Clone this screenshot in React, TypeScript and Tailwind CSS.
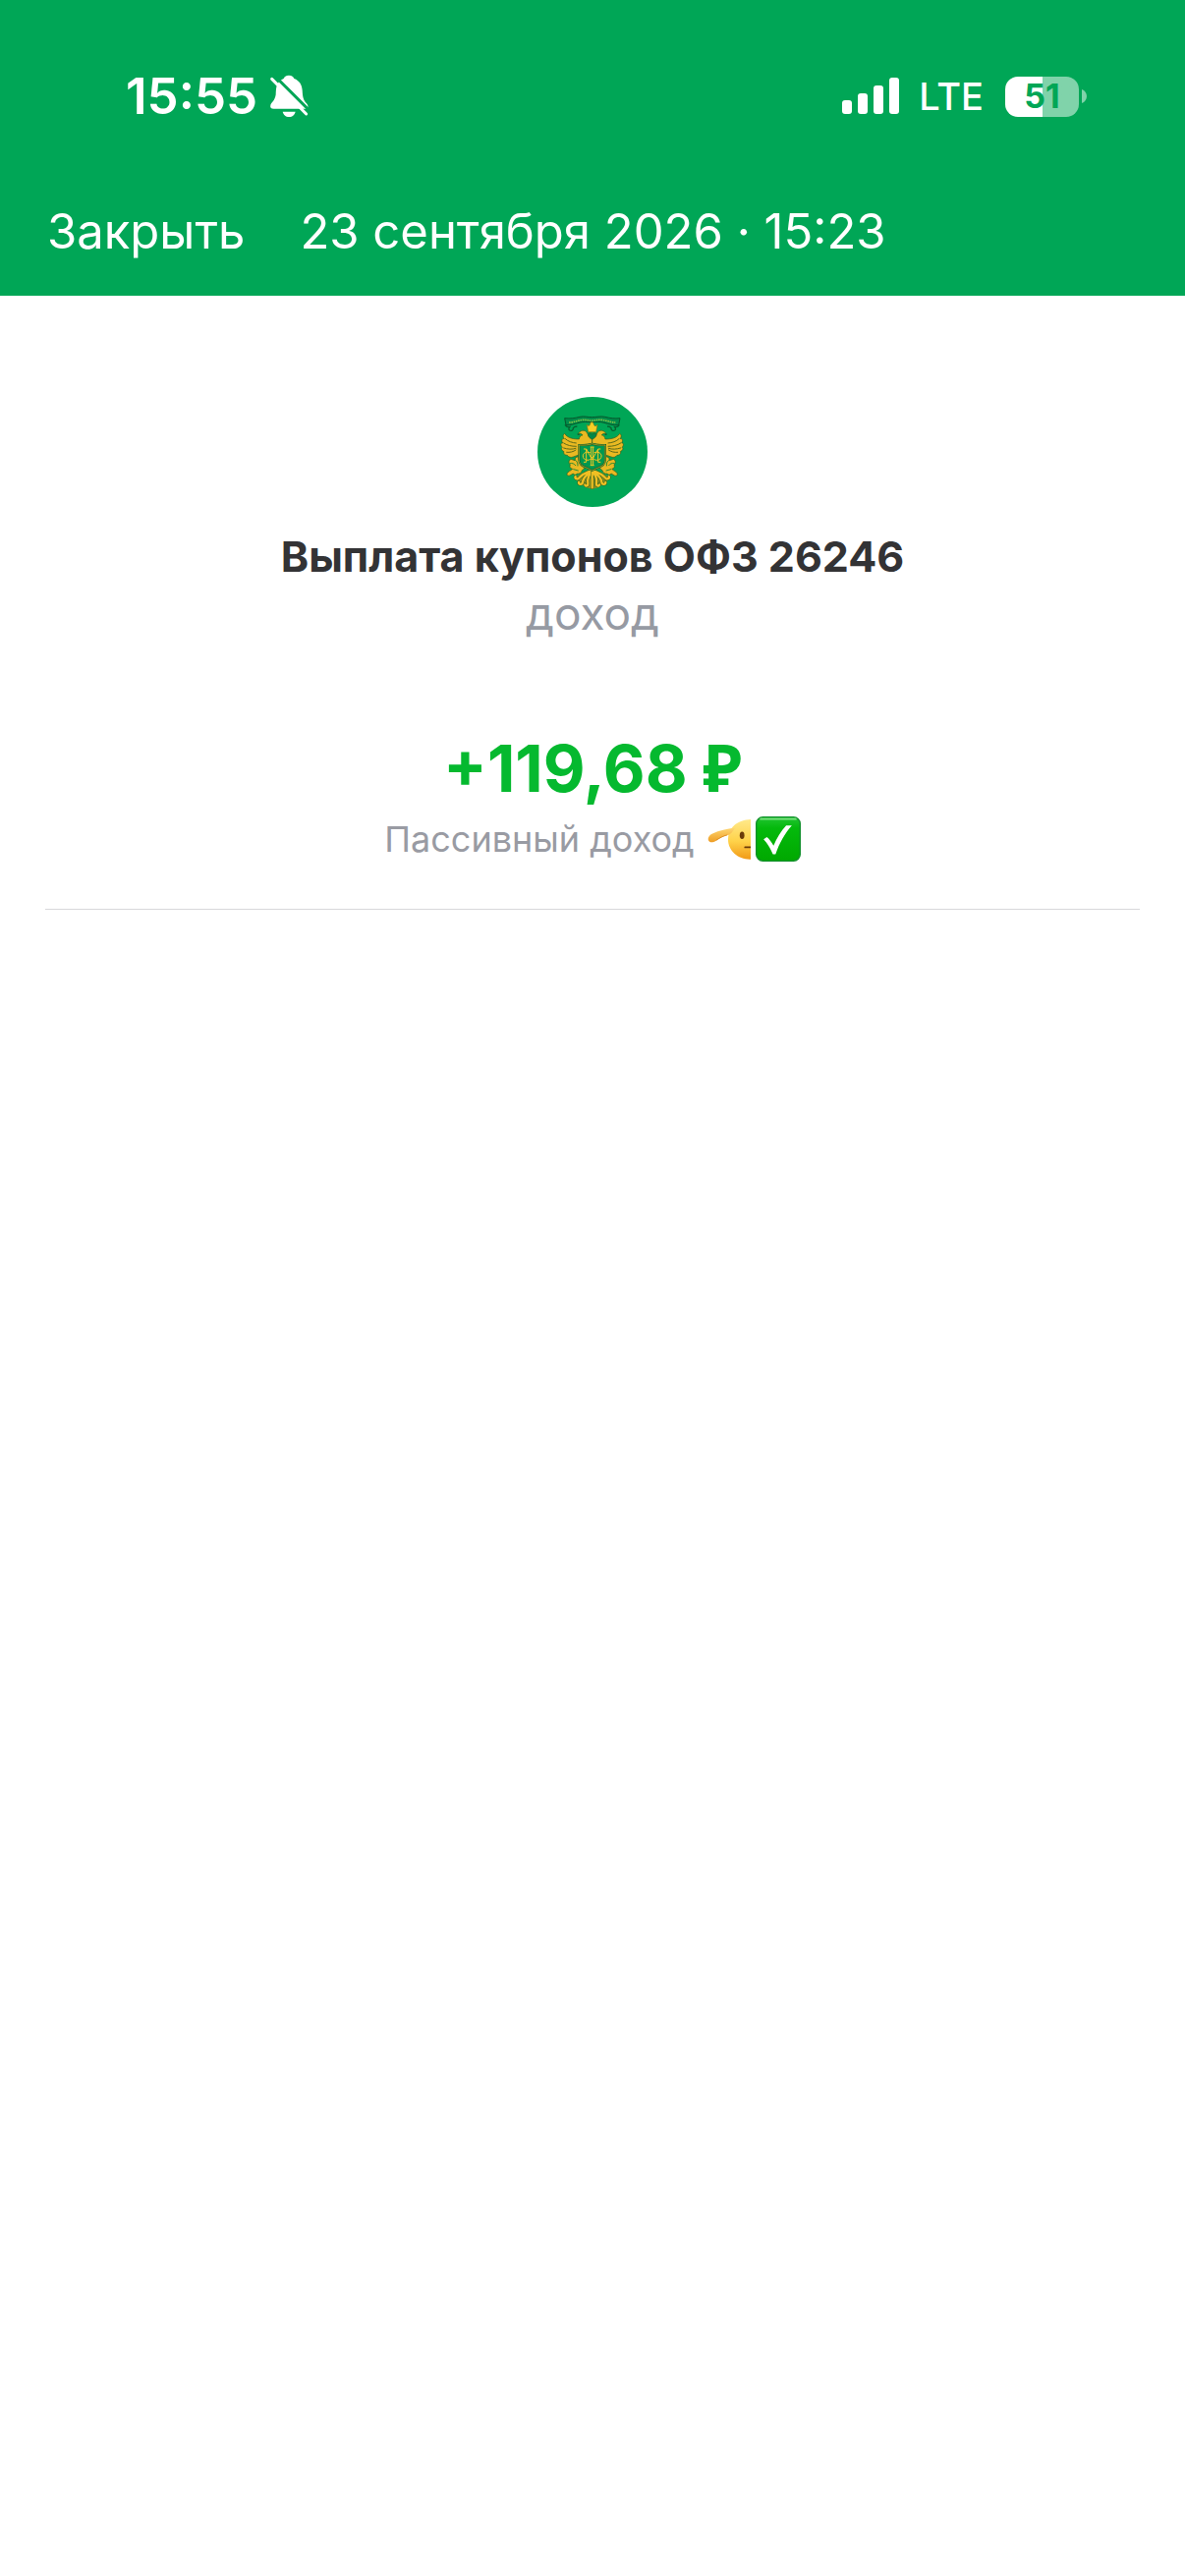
import React from "react";

function MutedBell() {
  return (
    <svg viewBox="0 0 120 132" className="h-11 w-10" role="img" aria-label="Без звука">
      <path
        fill="#fff"
        d="M60 2c9 0 14 5 16 10 16 6 24 19 25 36 1 22 4 31 13 40 4 5 5 8 4 16H14C5 104 2 100 4 93c2-7 14-14 16-32 1-17 1-24 6-33 4-8 10-13 18-16 2-5 7-10 16-10Z"
      />
      <path fill="#fff" d="M41 113h39c-2 9-9 16-19.500 16S43 122 41 113Z" />
      <path d="M16 3 124 111" stroke="#00a656" strokeWidth="9" />
      <path d="M8 13 113 120" stroke="#fff" strokeWidth="9" strokeLinecap="round" />
    </svg>
  );
}

function Signal() {
  return (
    <svg viewBox="0 0 58 38" className="h-[38px] w-[58px]" fill="#fff" role="img" aria-label="Уровень сигнала">
      <rect x="0" y="23" width="10" height="14" rx="3" />
      <rect x="16" y="16" width="10" height="21" rx="3" />
      <rect x="32" y="8" width="10" height="29" rx="3" />
      <rect x="48" y="0" width="10" height="37" rx="3" />
    </svg>
  );
}

function Battery() {
  return (
    <div className="flex items-center gap-[3px]">
      <div className="flex h-[41px] w-[75px] items-center justify-center rounded-[13px] bg-linear-to-r from-white from-51% to-[#80d3aa] to-51%">
        <span className="text-[34px] leading-none font-bold text-[#00a656]">51</span>
      </div>
      <svg viewBox="0 0 5 14" className="h-3.5 w-[5px]" aria-hidden="true">
        <path d="M0 0c3 1 5 4 5 7s-2 6-5 7Z" fill="#80d3aa" />
      </svg>
    </div>
  );
}

const tail = "M186 248c-12 5-30 12-37 22-5 7-15 1-11-4M187 250c-12 8-26 19-27 33-1 9-12 8-12 1M188 252c-9 10-14 22-12 34 1 10-7 11-9 5M189 248v52";

function EagleHalf() {
  return (
    <g>
      <g fill="#e9b922" stroke="#3c5a1a" strokeWidth="2" strokeLinejoin="round">
        <path d="M105 135c-6 3-6 11-1 16-7-2-10 5-5 13-7-1-7 7-1 13-5 2-3 9 5 13-3 5 2 11 10 11 4 6 11 8 18 5l20-7v-29l38-4v-16c-8-3-12-9-15-16-4-8-9-9-15-8-7 1-10 5-12 9 7-1 11 1 13 5-6 0-10 5-11 12-15 0-35-2-44-17Z" />
        <path d="M147 205l-9 3-2 9-12-4c-7 4-8 11-2 17-3 6 0 12 7 13-6 6-14 8-17 14-1 6 4 8 9 6l10-6c3 5 9 5 12 0 6 2 14-3 15-10 6-3 8-8 8-12-9-5-17-13-19-30Z" />
      </g>
      <g fill="none" stroke="#5d6a18" strokeWidth="3" strokeLinecap="round">
        <path d="M107 151c8 8 21 12 33 13M102 164c10 7 24 10 38 10M102 179c12 4 26 5 37 1M111 192c10 1 20-1 28-7" />
      </g>
      <path d="M121 226c8-2 13 1 17 6M135 214c7 4 11 10 10 19M132 244l14 4" stroke="#2b8a30" strokeWidth="3" fill="none" strokeLinecap="round" />
      <path d="M189 244c-22 6-44 16-52 26l13 16 21 14 18 4Z" fill="#8d8c1f" />
      <path d={tail} stroke="#2d601e" strokeWidth="10" fill="none" strokeLinecap="round" />
      <path d={tail} stroke="#f0bf23" strokeWidth="7" fill="none" strokeLinecap="round" />
      <path d="M150 138l-6-1" stroke="#173f1b" strokeWidth="3" />
      <path
        d="M106 108c5 8 11 8 17 5-6 4-7 9-3 12 6 3 12-1 11-7 3-4 8-5 12-5"
        fill="none"
        stroke="#07602f"
        strokeWidth="4"
      />
    </g>
  );
}

function Emblem() {
  return (
    <svg viewBox="22 23 336 336" className="size-28" role="img" aria-label="Герб">
      <circle cx="190" cy="191" r="168" fill="#00a656" />
      <EagleHalf />
      <g transform="translate(378 0) scale(-1 1)">
        <EagleHalf />
      </g>
      <path
        d="M105 88c18 2 31 0 46-4 14-3 24 1 37 1s27-4 40-1c16 4 29 6 46 4l-4 21c-17 1-30-2-44-7-13-4-24-2-38-2s-27-2-40 2c-13 4-26 8-39 7Z"
        fill="#008c4a"
        stroke="#07562c"
        strokeWidth="3"
        strokeLinejoin="round"
      />
      <path
        d="M118 101c15 0 28-7 44-8 10 0 17 2 27 2s18-3 28-2c16 1 29 8 43 8"
        fill="none"
        stroke="#7fc048"
        strokeWidth="5"
        strokeDasharray="5 2"
      />
      <path d="M173 108c3 4 7 5 9 0l3-8h6l4 9c2 5 6 3 10-1l-4 22h-24Z" fill="#f8ce25" stroke="#8a7410" strokeWidth="2" />
      <path d="M177 137c2-5 8-5 12 0 4-5 11-5 13 1 1 6-6 11-13 15-8-4-14-10-12-16Z" fill="#008849" stroke="#3b5a17" strokeWidth="2" />
      <path
        d="M149 170c15 1 29 0 40-4 11 4 25 5 40 4v46c0 19-20 20-40 32-20-12-40-13-40-32Z"
        fill="#00984f"
        stroke="#17602a"
        strokeWidth="6"
      />
      <path
        d="M149 170c15 1 29 0 40-4 11 4 25 5 40 4v46c0 19-20 20-40 32-20-12-40-13-40-32Z"
        fill="none"
        stroke="#d9b41f"
        strokeWidth="2"
      />
      <g fill="none" stroke="#f7c823" strokeWidth="3">
        <path d="M163 182h8v40h-8M215 182h-8v40h8M171 182l18 33 18-33M186 176v56M192 176v56M183 176h12M183 232h12" />
        <path d="M183 193c-27-8-29 23-8 23 6 0 11-4 14-9 3 5 8 9 14 9 21 0 19-31-8-23" />
      </g>
    </svg>
  );
}

function SaluteHalf() {
  return (
    <svg viewBox="0 0 130 130" className="size-11" role="img" aria-label="Честь имею">
      <defs>
        <linearGradient id="face" x1="0" y1="0" x2="0" y2="1">
          <stop offset="0" stopColor="#ffe98a" />
          <stop offset=".55" stopColor="#ffd249" />
          <stop offset="1" stopColor="#f19a18" />
        </linearGradient>
        <linearGradient id="hand" x1="0" y1="0" x2="0" y2="1">
          <stop offset="0" stopColor="#ffd873" />
          <stop offset="1" stopColor="#ee9d24" />
        </linearGradient>
      </defs>
      <path d="M130 6v120C91 127 62 101 62 66S91 7 130 6Z" fill="url(#face)" />
      <path d="M83 31C58 34 36 39 15 49 4 54-1 64 4 71c5 6 13 4 22-1 11-7 20-13 33-16 11-2 17-11 24-23Z" fill="url(#hand)" />
      <path d="M26 69c12-8 21-13 33-16" fill="none" stroke="#d07c14" strokeWidth="2" />
      <ellipse cx="104" cy="54" rx="7" ry="11" fill="#6b3b08" />
      <path d="M113 90h17" stroke="#6b3b08" strokeWidth="5" strokeLinecap="round" />
    </svg>
  );
}

function CheckBadge() {
  return (
    <svg viewBox="0 0 136 136" className="size-[46px]" role="img" aria-label="Готово">
      <defs>
        <linearGradient id="badge" x1="0" y1="0" x2="0" y2="1">
          <stop offset="0" stopColor="#21c532" />
          <stop offset=".25" stopColor="#04b90c" />
          <stop offset="1" stopColor="#00a900" />
        </linearGradient>
      </defs>
      <rect x="2" y="2" width="132" height="132" rx="20" fill="url(#badge)" stroke="#12902c" strokeWidth="4" />
      <path d="M15 8h106" stroke="#7be07f" strokeWidth="5" strokeLinecap="round" />
      <path d="m24 69 10-7c8 7 14 15 20 26 10-24 22-44 38-61h17C88 51 72 78 60 114h-8C43 94 36 82 24 69Z" fill="#fff" />
    </svg>
  );
}

export default function App() {
  return (
    <div className="min-h-screen bg-white font-['Inter','Noto_Sans',sans-serif]">
      <header className="bg-[#00a656] pb-[33px] text-white">
        <div className="flex items-center justify-between pt-[68px] pr-[100px] pl-32">
          <div className="flex items-center gap-3">
            <span className="text-[51px] leading-[60px] font-semibold">15:55</span>
            <MutedBell />
          </div>
          <div className="flex items-center">
            <Signal />
            <span className="mr-[22px] ml-5 text-[38px] leading-[60px] font-medium">LTE</span>
            <Battery />
          </div>
        </div>
        <nav className="flex items-center gap-14 px-12 pt-[76px] text-[49px] leading-[64px]">
          <button type="button">Закрыть</button>
          <time dateTime="2026-09-23T15:23">23 сентября 2026 · 15:23</time>
        </nav>
      </header>

      <main className="mx-[46px] flex flex-col items-center border-b border-[#d8d8da] pt-[103px] pb-[43px] text-center">
        <Emblem />
        <h1 className="mt-[22px] text-[43px] leading-[56px] font-bold text-[#333335]">Выплата купонов ОФЗ 26246</h1>
        <p className="text-[46px] leading-[60px] text-[#969aa3]">доход</p>
        <p className="mt-[88px] text-[66px] leading-[80px] font-bold text-[#05b92f]">
          +119,68 <span className="font-['Noto_Sans'] leading-none">₽</span>
        </p>
        <div className="mt-1 flex items-center gap-[5px]">
          <p className="mr-2 text-[36px] leading-[56px] text-[#999ba3]">Пассивный доход</p>
          <SaluteHalf />
          <CheckBadge />
        </div>
      </main>
    </div>
  );
}
